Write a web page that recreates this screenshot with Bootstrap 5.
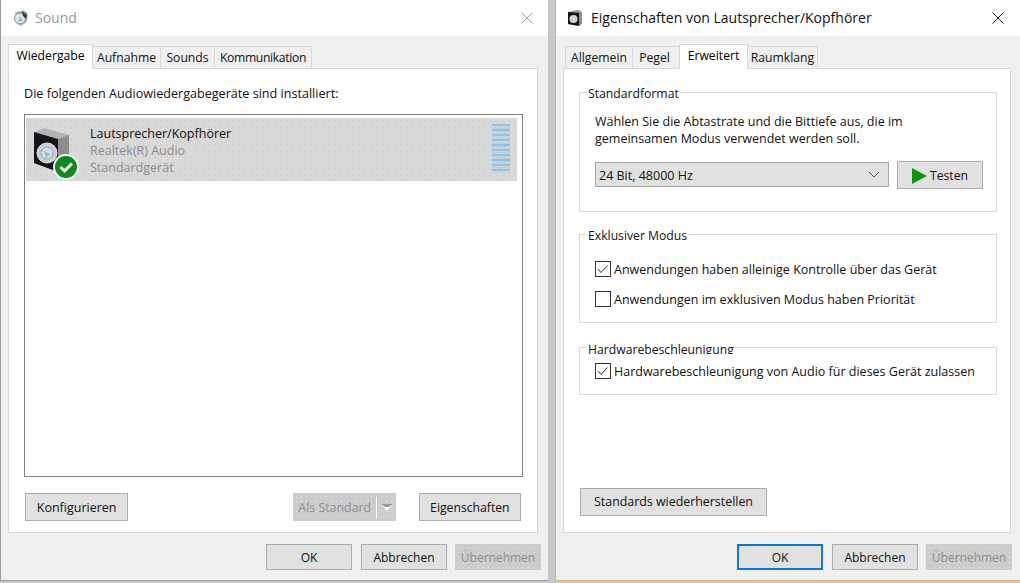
<!DOCTYPE html>
<html lang="de">
<head>
<meta charset="utf-8">
<title>Sound</title>
<link href="https://cdn.jsdelivr.net/npm/bootstrap@5.3.0/dist/css/bootstrap.min.css" rel="stylesheet">
<style>
html,body{height:583px;overflow:hidden}
body{background:#c8c8c8;font-family:"Open Sans","Noto Sans","Liberation Sans",sans-serif;font-size:12px;line-height:17px;color:#111}
.dlg{background:#f0f0f0;height:581px}
.dlg-l{width:548px;border-left:1px solid #9a9a9a;border-bottom:1px solid #9a9a9a}
.dlg-r{width:465px;margin-left:7px;flex:1 0 auto;border-left:1px solid #dcb36a;border-bottom:1px solid #dcb36a}
.ttl{height:36px;background:#fff;font-size:14px;padding-left:11px;gap:5px}
.ttl-off{color:#9a9a9a}
.dlg-r .ttl{padding-left:11px;gap:8px}
.tabx{margin-left:auto;margin-right:15px;width:12px;height:12px;display:block}
.dlg-r .tabx{margin-right:16px}
.tabs{border:0;margin:8px 10px 0 7px;height:24px;align-items:flex-end;flex-wrap:nowrap}
.dlg-r .tabs{margin-left:9px}
.tabs .nav-link{margin:0 -1px -1px 0;padding:0;text-align:center;height:23px;line-height:22px;border:1px solid #d9d9d9;border-radius:0;background:#f0f0f0;color:#111;font-size:12.2px;white-space:nowrap}
.tabs .nav-link.active{height:25px;line-height:21px;background:#fff;border-color:#d9d9d9 #d9d9d9 #fff;position:relative;z-index:1}
.dlg-l .tabs li:nth-child(1) a{width:85px}
.dlg-l .tabs li:nth-child(2) a{width:69px}
.dlg-l .tabs li:nth-child(3) a{width:55px}
.dlg-l .tabs li:nth-child(4) a{width:98px;letter-spacing:-.35px}
.dlg-r .tabs li:nth-child(1) a{width:68px}
.dlg-r .tabs li:nth-child(2) a{width:48px;padding-right:3px}
.dlg-r .tabs li:nth-child(3) a{width:69px}
.dlg-r .tabs li:nth-child(4) a{width:71px}
.pane{background:#fff;border:1px solid #d9d9d9;height:467px;margin:0 10px 0 7px;padding:0}
.dlg-r .pane{margin-left:7px;margin-right:9px}
.lead-t{padding:16px 0 0 15px;height:45px;font-size:12.6px}
.dev{margin:0 14px 0 15px;height:363px;border:1px solid #808080;padding:3px 5px 0 1px;border-radius:0;display:block}
.dev-row{height:63px;border:0;border-radius:0;padding:0;background-color:#d9d9d9;background-image:radial-gradient(circle,#c9c9c9 .6px,transparent .8px);background-size:6px 6px;color:#111}
.dev-ic{width:59px;margin-left:5px}
.dev-tx{padding-top:7px;line-height:17px;font-size:12.5px}
.dev-sub{color:#8c8c8c}
.meter{width:18px;height:49px;margin:6px 7px 0 auto;background-color:#a9cfe6;background-image:radial-gradient(circle,#c4c4c4 .8px,transparent 1px),linear-gradient(#8cc3e4 40%,#c2d6e2 40%);background-size:3px 3px,100% 5px}
.btn-w{--bs-btn-border-radius:0;--bs-btn-padding-y:0;--bs-btn-padding-x:0;--bs-btn-font-size:12.2px;--bs-btn-line-height:1;--bs-btn-bg:#e1e1e1;--bs-btn-color:#111;--bs-btn-border-color:#adadad;--bs-btn-hover-bg:#e1e1e1;--bs-btn-hover-border-color:#adadad;--bs-btn-disabled-bg:#ccc;--bs-btn-disabled-border-color:#ccc;--bs-btn-disabled-color:#8f8f8f;--bs-btn-disabled-opacity:1;height:28px;white-space:nowrap;padding-top:2px}
.btn-w:disabled{background-image:radial-gradient(circle,#e4e4e4 .5px,transparent .8px);background-size:5px 5px}
.btn-foot{width:86px;height:26px;--bs-btn-font-size:12px}
.btn-foot.is-def{border:2px solid #0f78d4}
.btn-foot:disabled{margin-left:-1px}
.btn-conf{width:104px;--bs-btn-font-size:12.5px}
.btn-props{width:103px;margin-left:23px}
.pane-bar{padding:16px 16px 0 16px}
.split{width:103px;margin-left:165px;gap:0;align-items:center;justify-content:flex-start;padding-left:4px;--bs-btn-font-size:12.4px}
.split-sep{width:1px;height:22px;background:#fff;margin:0 4px 0 5px}
.foot{height:47px;padding:11px 7px 0 0;justify-content:flex-end;gap:9px}
.dlg-r .foot{padding-right:8px}
.grp{border:1px solid #d9d9d9;margin:0 13px 0 15px;padding:0 12px 0 15px;position:relative}
.grp>legend{float:none;width:auto;font-size:12.2px;line-height:16px;margin:0 0 0 -8px;padding:2px 1px 0;color:#111}
.g1{height:128px;margin-top:15px}
.g2{height:97px;margin-top:14px}
.g3{height:53px;margin-top:19px}
.g3>legend{height:12px;padding-top:0;overflow:hidden}
.g1 p{margin:11px 0 0;line-height:17px;font-size:12.5px}
.fmt-row{margin-top:14px;gap:8px;align-items:center}
.fmt{flex:none;width:294px;height:25px;border:1px solid #a6a6a6;border-radius:0;background-color:#e1e1e1;background-position:right 8px center;background-size:12px 9px;padding:2px 0 0 3px;font-size:12.5px;line-height:1;color:#111;--bs-form-select-bg-img:url("data:image/svg+xml,%3csvg xmlns='http://www.w3.org/2000/svg' viewBox='0 0 12 9'%3e%3cpath fill='none' stroke='%23555' d='M1 2l5 5 5-5'/%3e%3c/svg%3e")}
.btn-test{flex:none;width:86px;gap:3px}
.chk{min-height:0;padding:0;margin:0;display:flex;align-items:center;gap:3px;height:17px}
.chk .form-check-input{float:none;margin:0;width:16px;height:16px;border:1px solid #333;border-radius:0;background-color:#fff;flex:none;opacity:1}
.chk .form-check-input:checked{background-color:#fff;border-color:#333;--bs-form-check-bg-image:url("data:image/svg+xml,%3csvg xmlns='http://www.w3.org/2000/svg' viewBox='0 0 16 16'%3e%3cpath fill='none' stroke='%23333' d='M3 8l3 3.500L12.500 4.500'/%3e%3c/svg%3e");background-size:16px 16px}
.chk .form-check-label{opacity:1;font-size:12.5px;line-height:17px;white-space:nowrap}
.g2 .chk:nth-of-type(1){margin-top:17px}
.g2 .chk+.chk{margin-top:13px}
.g3 .chk{margin-top:9px}
.std-wrap{margin:93px 0 0 16px}
.btn-std{width:187px;--bs-btn-font-size:12.4px;padding-top:0}
</style>
</head>
<body class="d-flex m-0">
<section class="dlg dlg-l d-flex flex-column flex-shrink-0">
  <header class="ttl d-flex align-items-center">
    <svg width="18" height="18" viewBox="0 0 18 18"><path d="M3 3l9-2 4 5-1 7-6 4-5-3z" fill="#b9bec2"/><circle cx="8" cy="9.500" r="5.500" fill="#dfe6ea" stroke="#8a8a8a"/><path d="M8 7l3 5-5 1z" fill="#8fbcd6"/><path d="M10 2l5 4-1 4-3-3z" fill="#333"/><path d="M13 3l2 1-1 2-2-1z" fill="#2a9a3a"/></svg>
    <span class="ttl-off">Sound</span>
    <svg class="tabx" viewBox="0 0 12 12"><path d="M.5.500l11 11M11.500.500l-11 11" stroke="#a0a0a0" fill="none"/></svg>
  </header>
  <ul class="nav nav-tabs tabs">
    <li class="nav-item"><a class="nav-link active" href="#">Wiedergabe</a></li>
    <li class="nav-item"><a class="nav-link" href="#">Aufnahme</a></li>
    <li class="nav-item"><a class="nav-link" href="#">Sounds</a></li>
    <li class="nav-item"><a class="nav-link" href="#">Kommunikation</a></li>
  </ul>
  <div class="pane d-flex flex-column">
    <div class="lead-t">Die folgenden Audiowiedergabegeräte sind installiert:</div>
    <div class="list-group dev">
      <div class="list-group-item dev-row d-flex">
        <div class="dev-ic">
          <svg width="50" height="60" viewBox="0 0 50 60" class="d-block mt-1">
            <path d="M3 10L13 6l25 7-11 4z" fill="#b4b4b4"/>
            <path d="M27 17l11-4v32l-11 5z" fill="#8d8d8d"/>
            <path d="M3 10l24 7v33L3 41z" fill="#14141a"/>
            <circle cx="16" cy="31" r="10" fill="#c9cfd2" stroke="#e8e8e8"/>
            <circle cx="16" cy="31" r="6" fill="#d5dfe4" stroke="#8fa9b8"/>
            <path d="M13 29l6 3-4 4z" fill="#8fbcd6"/>
            <circle cx="35" cy="45" r="13" fill="#f4f4f4"/>
            <circle cx="35" cy="45" r="11" fill="#0e8a1e"/>
            <path d="M29.500 45l4 4 7.500-7.500" fill="none" stroke="#fff" stroke-width="3"/>
          </svg>
        </div>
        <div class="dev-tx">
          <div>Lautsprecher/Kopfhörer</div>
          <div class="dev-sub">Realtek(R) Audio</div>
          <div class="dev-sub">Standardgerät</div>
        </div>
        <div class="meter"></div>
      </div>
    </div>
    <div class="d-flex pane-bar">
      <button class="btn btn-w btn-conf">Konfigurieren</button>
      <button class="btn btn-w d-flex split" disabled>Als Standard<span class="split-sep"></span><svg width="12" height="7" viewBox="0 0 12 7"><path d="M0 0h12L6 7z" fill="#fff"/><path d="M0 0h12L8 3H4z" fill="#999"/></svg></button>
      <button class="btn btn-w btn-props">Eigenschaften</button>
    </div>
  </div>
  <div class="foot d-flex">
    <button class="btn btn-w btn-foot">OK</button>
    <button class="btn btn-w btn-foot">Abbrechen</button>
    <button class="btn btn-w btn-foot" disabled>Übernehmen</button>
  </div>
</section>
<section class="dlg dlg-r d-flex flex-column">
  <header class="ttl d-flex align-items-center">
    <svg width="16" height="18" viewBox="0 0 16 18"><path d="M1 3l10-2 4 2v12l-3 2-11-2z" fill="#8f8f8f"/><path d="M1 3l11 1v13L1 15z" fill="#14141a"/><circle cx="6.500" cy="10" r="4" fill="#cfd4d6"/></svg>
    <span>Eigenschaften von Lautsprecher/Kopfhörer</span>
    <svg class="tabx" viewBox="0 0 12 12"><path d="M.5.500l11 11M11.500.500l-11 11" stroke="#222" fill="none"/></svg>
  </header>
  <ul class="nav nav-tabs tabs">
    <li class="nav-item"><a class="nav-link" href="#">Allgemein</a></li>
    <li class="nav-item"><a class="nav-link" href="#">Pegel</a></li>
    <li class="nav-item"><a class="nav-link active" href="#">Erweitert</a></li>
    <li class="nav-item"><a class="nav-link" href="#">Raumklang</a></li>
  </ul>
  <div class="pane d-flex flex-column">
    <fieldset class="grp g1">
      <legend>Standardformat</legend>
      <p>Wählen Sie die Abtastrate und die Bittiefe aus, die im<br>gemeinsamen Modus verwendet werden soll.</p>
      <div class="d-flex fmt-row">
        <select class="form-select fmt"><option>24 Bit, 48000 Hz</option></select>
        <button class="btn btn-w btn-test d-flex align-items-center justify-content-center"><svg width="15" height="16" viewBox="0 0 15 16"><path d="M0 0l15 8L0 16z" fill="#119511"/></svg>Testen</button>
      </div>
    </fieldset>
    <fieldset class="grp g2">
      <legend>Exklusiver Modus</legend>
      <div class="form-check chk"><input class="form-check-input" type="checkbox" id="c1" checked><label class="form-check-label" for="c1">Anwendungen haben alleinige Kontrolle über das Gerät</label></div>
      <div class="form-check chk"><input class="form-check-input" type="checkbox" id="c2"><label class="form-check-label" for="c2">Anwendungen im exklusiven Modus haben Priorität</label></div>
    </fieldset>
    <fieldset class="grp g3">
      <legend>Hardwarebeschleunigung</legend>
      <div class="form-check chk"><input class="form-check-input" type="checkbox" id="c3" checked><label class="form-check-label" for="c3">Hardwarebeschleunigung von Audio für dieses Gerät zulassen</label></div>
    </fieldset>
    <div class="std-wrap"><button class="btn btn-w btn-std">Standards wiederherstellen</button></div>
  </div>
  <div class="foot d-flex">
    <button class="btn btn-w btn-foot is-def">OK</button>
    <button class="btn btn-w btn-foot">Abbrechen</button>
    <button class="btn btn-w btn-foot" disabled>Übernehmen</button>
  </div>
</section>
<script src="https://cdn.jsdelivr.net/npm/bootstrap@5.3.0/dist/js/bootstrap.bundle.min.js"></script>
</body>
</html>
